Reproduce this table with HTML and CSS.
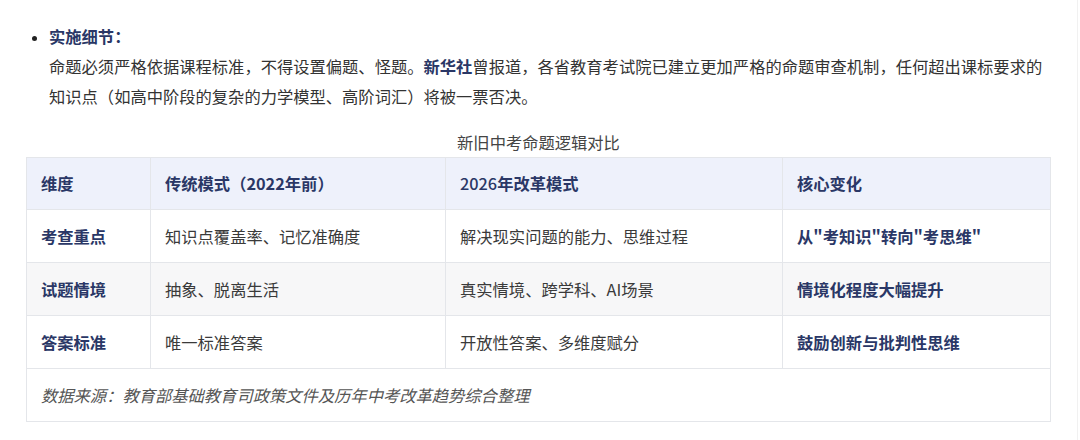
FILE: index.html
```html
<!DOCTYPE html>
<html lang="zh">
<head>
<meta charset="utf-8">
<link rel="stylesheet" href="styles.css">
</head>
<body>
<div class="page">
  <ul class="points">
    <li>
      <strong class="lead">实施细节：</strong><br>
      命题必须严格依据课程标准，不得设置偏题、怪题。<strong class="src">新华社</strong>曾报道，各省教育考试院已建立更加严格的命题审查机制，任何超出课标要求的知识点（如高中阶段的复杂的力学模型、高阶词汇）将被一票否决。
    </li>
  </ul>
  <table class="cmp">
    <caption>新旧中考命题逻辑对比</caption>
    <colgroup>
      <col class="c1"><col class="c2"><col class="c3"><col class="c4">
    </colgroup>
    <thead>
      <tr>
        <th>维度</th>
        <th>传统模式（2022年前）</th>
        <th><span class="num">2026</span>年改革模式</th>
        <th>核心变化</th>
      </tr>
    </thead>
    <tbody>
      <tr>
        <td class="key">考查重点</td>
        <td>知识点覆盖率、记忆准确度</td>
        <td>解决现实问题的能力、思维过程</td>
        <td class="key">从"考知识"转向"考思维"</td>
      </tr>
      <tr class="alt">
        <td class="key">试题情境</td>
        <td>抽象、脱离生活</td>
        <td>真实情境、跨学科、AI场景</td>
        <td class="key">情境化程度大幅提升</td>
      </tr>
      <tr>
        <td class="key">答案标准</td>
        <td>唯一标准答案</td>
        <td>开放性答案、多维度赋分</td>
        <td class="key">鼓励创新与批判性思维</td>
      </tr>
    </tbody>
    <tfoot>
      <tr>
        <td colspan="4" class="note">数据来源：教育部基础教育司政策文件及历年中考改革趋势综合整理</td>
      </tr>
    </tfoot>
  </table>
</div>
</body>
</html>
```

FILE: styles.css
```css
html, body {
  margin: 0;
  padding: 0;
  background: #ffffff;
}

body {
  font-family: "Noto Sans CJK SC", "Noto Sans", "Liberation Sans", sans-serif;
  font-size: 16.3px;
  color: #333333;
}

.page {
  width: 1078px;
  height: 440px;
  border-right: 1px solid #f1f1f1;
  padding: 21px 0 0 26px;
  box-sizing: border-box;
}

.points {
  margin: 0;
  padding: 0 20px 0 23px;
  line-height: 30px;
  list-style: disc;
}

.points li::marker {
  color: #222;
  font-size: 14px;
}

.lead,
.src {
  color: #2a3766;
  font-weight: 700;
}

.cmp {
  margin-top: 16px;
  width: 1024px;
  border-collapse: collapse;
  table-layout: fixed;
  line-height: 24px;
}

.cmp caption {
  line-height: 30px;
  color: #444;
}

.c1 { width: 124px; }
.c2 { width: 295px; }
.c3 { width: 337px; }
.c4 { width: 268px; }

.cmp th,
.cmp td {
  border: 1px solid #e4e6ea;
  padding: 14px;
  text-align: left;
  vertical-align: middle;
}

.cmp thead th {
  background: #eef1fb;
  color: #2a3766;
  font-weight: 700;
  padding: 13px 14px 14px 14px;
}

.cmp .num {
  font-weight: 500;
}

.cmp td {
  color: #3a3a3a;
}

.cmp td.key {
  color: #2a3766;
  font-weight: 700;
}

.cmp tr.alt td {
  background: #f7f7f8;
}

.cmp td.note {
  font-style: italic;
  color: #555555;
}
```
